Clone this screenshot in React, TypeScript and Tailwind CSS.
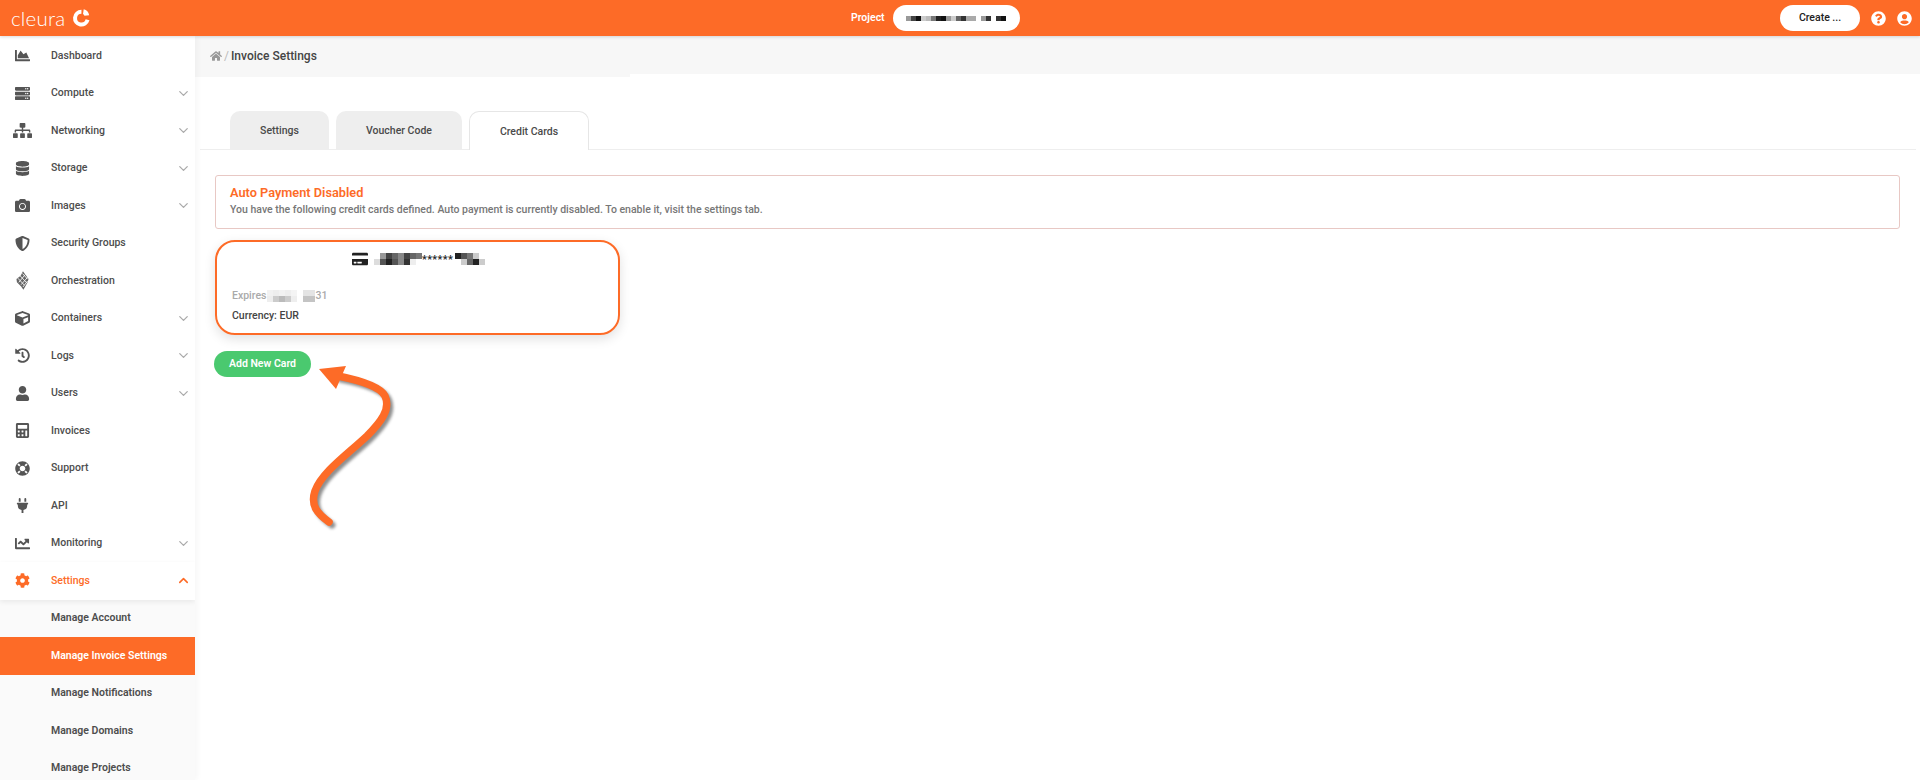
import React from 'react';
import { ChevronDown, ChevronUp } from 'lucide-react';
import {
  FaChartArea, FaServer, FaSitemap, FaDatabase, FaCamera, FaShieldAlt, FaCube, FaHistory,
  FaUser, FaCalculator, FaLifeRing, FaPlug, FaChartLine, FaCog, FaHome, FaCreditCard,
  FaQuestionCircle, FaUserCircle,
} from 'react-icons/fa';

function OrchestrationIcon({ className }: { className?: string }) {
  return (
    <svg viewBox="0 0 14 20" className={className}>
      <path d="M7.5 0L10 3.5 13.5 8.5 12.5 12 8 20 5.5 16.5 1 12 .5 8.5 5 5z" fill="currentColor" />
      <path d="M2 7.5L9 15M4.5 5L11.5 12.5M7 2.5L12.5 8.5M3 12L10 3.5M5.5 14.5L12.5 6.5M7.5 17L12.5 10.5" stroke="#fff" strokeWidth="0.9" fill="none" />
    </svg>
  );
}

const menu = [
  { label: 'Dashboard', icon: FaChartArea },
  { label: 'Compute', icon: FaServer, more: true },
  { label: 'Networking', icon: FaSitemap, more: true, big: true },
  { label: 'Storage', icon: FaDatabase, more: true },
  { label: 'Images', icon: FaCamera, more: true },
  { label: 'Security Groups', icon: FaShieldAlt },
  { label: 'Orchestration', icon: OrchestrationIcon, tall: true },
  { label: 'Containers', icon: FaCube, more: true },
  { label: 'Logs', icon: FaHistory, more: true },
  { label: 'Users', icon: FaUser, more: true },
  { label: 'Invoices', icon: FaCalculator },
  { label: 'Support', icon: FaLifeRing },
  { label: 'API', icon: FaPlug },
  { label: 'Monitoring', icon: FaChartLine, more: true },
];

const subMenu = ['Manage Account', 'Manage Invoice Settings', 'Manage Notifications', 'Manage Domains', 'Manage Projects'];

// pixelated blocks that hide private values
function Mosaic({ rows, cell, className }: { rows: string[][]; cell: number; className?: string }) {
  const cols = Math.max(...rows.map((r) => r.length));
  return (
    <svg width={cols * cell} height={rows.length * cell} className={className} shapeRendering="crispEdges">
      {rows.map((row, y) =>
        row.map((c, x) => (c ? <rect key={`${x}-${y}`} x={x * cell} y={y * cell} width={cell} height={cell} fill={c} /> : null))
      )}
    </svg>
  );
}

function Logo() {
  return (
    <svg width="20" height="20" viewBox="0 0 22 22" className="ml-[6px]">
      <path d="M11.5 4.2A7 7 0 1 0 18.2 13" fill="none" stroke="#fff" strokeWidth="4.4" />
      <path d="M14 1.5a8.5 8.5 0 0 1 6 6.5l-5.2.6a4 4 0 0 0-1.6-2z" fill="#fff" />
    </svg>
  );
}

export default function App() {
  return (
    <div className="h-[780px] w-[1920px] overflow-hidden bg-white text-[#4a4a4a] font-['Roboto',sans-serif] relative">
      <header className="h-9 bg-[#fd6b27] relative z-20 shadow-[0_1px_3px_rgba(0,0,0,0.15)] flex items-center text-white">
        <div className="w-[195px] flex items-center pl-[11px]">
          <span className="text-[20.5px] font-light tracking-[0.2px] leading-none font-['Lato',sans-serif]">cleura</span>
          <Logo />
        </div>
        <div className="flex-1 flex items-center pl-[656px]">
          <span className="text-[10.5px] font-semibold mr-2">Project</span>
          <div className="w-[127px] h-[26px] rounded-full bg-white flex items-center pl-[13px]">
            <Mosaic
              cell={5}
              rows={[['#999', '#444', '#111', '#ccc', '#bbb', '#777', '#222', '#111', '#999', '#ccc', '#666', '#333', '#aaa', '#aaa', '', '#999', '#333', '', '#333', '#111']]}
            />
          </div>
        </div>
        <button className="w-20 h-[26px] rounded-full bg-white text-[#222] text-[10.5px] font-medium">Create ...</button>
        <FaQuestionCircle className="ml-[11px] text-[15px]" />
        <FaUserCircle className="ml-[11px] mr-2 text-[15px]" />
      </header>

      <div className="flex h-[744px]">
        <aside className="w-[195px] shrink-0 relative z-10 bg-white overflow-hidden pt-[1px] shadow-[2px_0_6px_rgba(0,0,0,0.04)]">
          {menu.map((item) => {
            const Icon = item.icon;
            return (
              <div key={item.label} className="h-[37.5px] flex items-center text-[10.5px] font-medium text-[#4d4d4d]">
                <span className="w-[51px] flex justify-center pr-[7px] shrink-0">
                  <Icon
                    className={
                      item.big
                        ? 'text-[19px] text-[#555]'
                        : item.tall
                          ? 'w-[13px] h-[19px] text-[#666]'
                          : 'w-[15px] h-[15px] text-[#555]'
                    }
                  />
                </span>
                <span className="flex-1">{item.label}</span>
                {item.more && <ChevronDown className="w-[15px] h-[15px] text-[#aaa] mr-[4px]" />}
              </div>
            );
          })}
          <div className="h-[37.5px] flex items-center text-[10.5px] font-medium text-[#fd6b27] relative z-10 bg-white shadow-[0_2px_5px_rgba(0,0,0,0.07)]">
            <span className="w-[51px] flex justify-center pr-[7px] shrink-0">
              <FaCog className="w-[15px] h-[15px]" />
            </span>
            <span className="flex-1">Settings</span>
            <ChevronUp className="w-[15px] h-[15px] mr-[4px]" strokeWidth={2.5} />
          </div>
          <div className="bg-[#fafafa]">
            {subMenu.map((label) => (
              <div
                key={label}
                className={
                  label === 'Manage Invoice Settings'
                    ? 'h-[37.5px] flex items-center pl-[51px] text-[10.5px] font-semibold bg-[#fd6b27] text-white'
                    : 'h-[37.5px] flex items-center pl-[51px] text-[10.5px] font-semibold text-[#4d4d4d]'
                }
              >
                {label}
              </div>
            ))}
          </div>
        </aside>

        <main className="flex-1 min-w-0">
          <div className="h-[38px] bg-[#f7f7f7] flex items-center pl-[15px] pt-[1px] text-[12px] font-medium text-[#444]">
            <FaHome className="text-[12px] text-[#999]" />
            <span className="mx-[2px] text-[#bbb] font-normal">/</span>
            <span>Invoice Settings</span>
          </div>
          <div className="h-[3px] w-[435px] bg-[#f7f7f7]" />

          <div className="mt-[34px] ml-[5px] mr-1 h-[39px] flex items-end gap-[7px] pl-[30px] border-b border-[#eeeeee]">
            <div className="w-[99px] h-[38px] pt-[1px] rounded-t-[10px] bg-[#eeeeee] flex items-center justify-center text-[10.5px] font-medium">Settings</div>
            <div className="w-[126px] h-[38px] pt-[1px] rounded-t-[10px] bg-[#eeeeee] flex items-center justify-center text-[10.5px] font-medium">Voucher Code</div>
            <div className="w-[120px] h-[39px] pt-[1px] -mb-px rounded-t-[10px] bg-white border border-b-0 border-[#e6e6e6] flex items-center justify-center text-[10.5px] font-medium">Credit Cards</div>
          </div>

          <div className="ml-5 mr-5 mt-[25px]">
            <div className="h-[54px] border border-[#e8c8c4] rounded-[3px] pl-[14px] pr-4 pt-[8px]">
              <div className="text-[12.75px] leading-[18px] font-semibold text-[#fd6b27]">Auto Payment Disabled</div>
              <div className="text-[10.5px] leading-[16px] font-medium text-[#777]">
                You have the following credit cards defined. Auto payment is currently disabled. To enable it, visit the settings tab.
              </div>
            </div>

            <div className="mt-[11px] w-[405px] h-[95px] border-2 border-[#fd6b27] rounded-[20px] shadow-[0_4px_12px_rgba(0,0,0,0.12)] px-[15px] pt-[9px]">
              <div className="flex items-center h-[16px] ml-[120px] text-[#222]">
                <FaCreditCard className="w-[16px] h-[16px]" />
                <Mosaic
                  cell={6}
                  rows={[
                    ['', '', '#999', '#444', '#666', '#888', '#444', '#666', '#777'],
                    ['', '#ddd', '#555', '#222', '#555', '#888', '#333', '#eee', ''],
                  ]}
                />
                <span className="w-[33px] text-[11px] font-medium tracking-[0.3px] leading-none">******</span>
                <Mosaic
                  cell={6}
                  rows={[
                    ['#222', '#555', '#777', '#ccc', ''],
                    ['', '#ccc', '#666', '#222', '#ccc'],
                  ]}
                />
              </div>
              <div className="mt-[21px] flex items-center h-[16px] text-[10.5px] text-[#aaa] font-medium">
                <span>Expires</span>
                <Mosaic
                  cell={6}
                  className="ml-[1px]"
                  rows={[
                    ['#f2f2f2', '#eee', '#f2f2f2', '#eee', '#f4f4f4', '', '#e4e4e4', '#e4e4e4'],
                    ['#eee', '#ccc', '#bbb', '#ccc', '#eee', '', '#c4c4c4', '#c4c4c4'],
                  ]}
                />
                <span>31</span>
              </div>
              <div className="mt-[4px] text-[10.5px] leading-4 font-medium text-[#444]">Currency: EUR</div>
            </div>

            <button className="mt-[16px] -ml-px w-[97px] h-[26px] rounded-full bg-[#4ac96f] text-white text-[10.5px] font-semibold">Add New Card</button>
          </div>
        </main>
      </div>

      {/* hand-drawn arrow pointing at the button */}
      <svg className="absolute left-[300px] top-[350px] overflow-visible" width="100" height="180" viewBox="300 350 100 180">
        <g transform="translate(3 3)" opacity="0.55" fill="none" stroke="#333" strokeWidth="7" strokeLinecap="round" style={{ filter: 'blur(1.5px)' }}>
          <path d="M329 522C318 514 310 506 315 491C322 472 348 454 367 436C381 422 391 409 385 396C380 386 358 380 338 376" />
        </g>
        <path d="M329 522C318 514 310 506 315 491C322 472 348 454 367 436C381 422 391 409 385 396C380 386 358 380 338 376" fill="none" stroke="#fd6b27" strokeWidth="7.5" strokeLinecap="round" />
        <path d="M319 369L346 366L336 389Z" fill="#fd6b27" />
      </svg>
    </div>
  );
}
